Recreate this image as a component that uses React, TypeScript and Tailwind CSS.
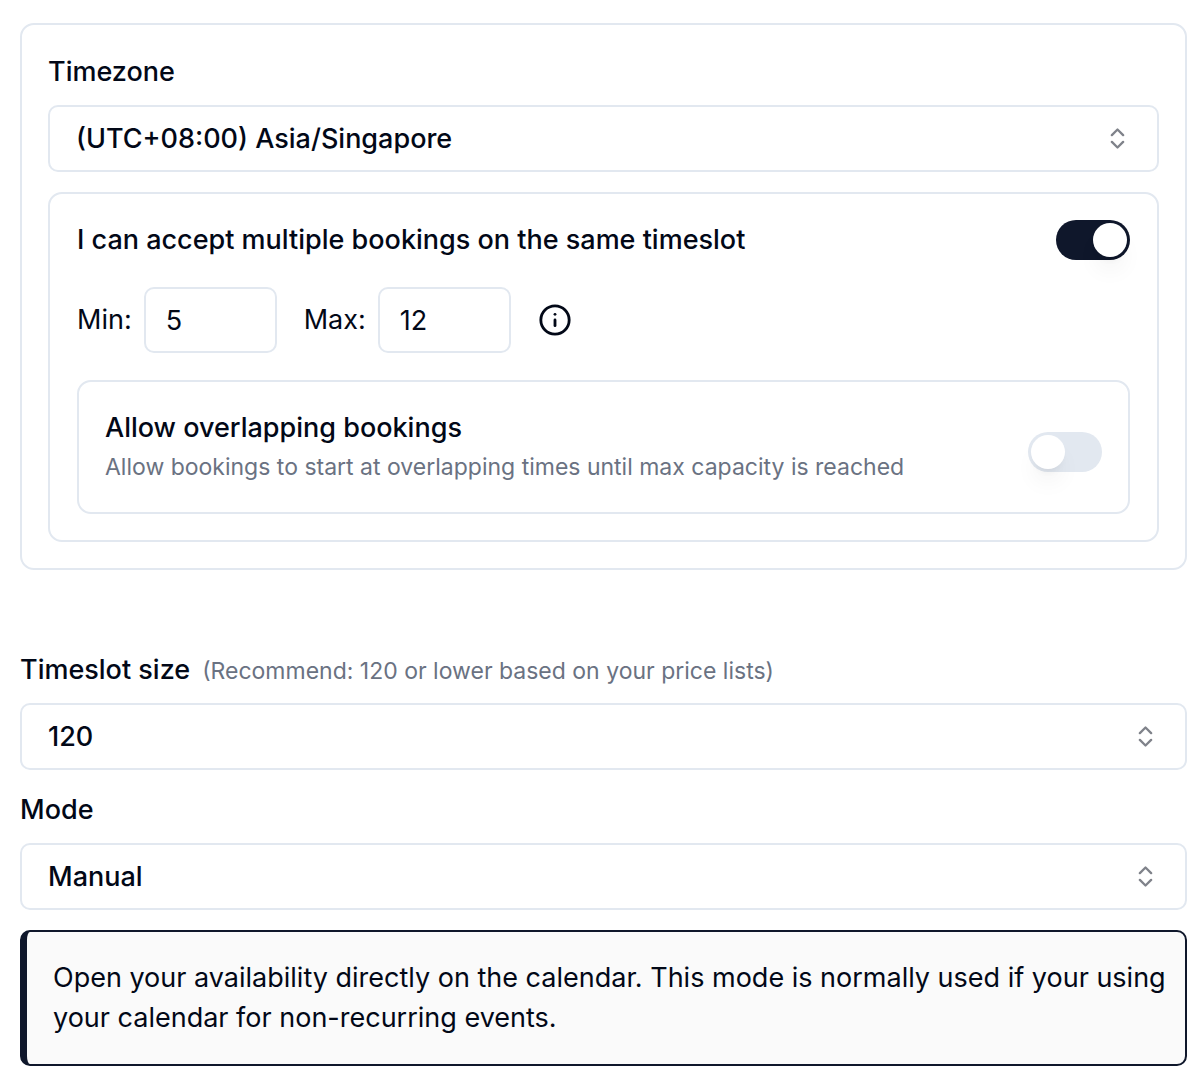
import React, { useState } from "react";
import { ChevronsUpDown, Info } from "lucide-react";

interface SelectFieldProps {
  id: string;
  value: string;
  options: string[];
  onChange: (value: string) => void;
}

const SelectField: React.FC<SelectFieldProps> = ({ id, value, options, onChange }) => {
  return (
    <div className="relative">
      <select
        id={id}
        value={value}
        onChange={(e) => onChange(e.target.value)}
        className="block h-[67px] w-full appearance-none rounded-[10px] border-2 border-slate-200 bg-white px-[26px] font-medium"
      >
        {options.map((option) => (
          <option key={option} value={option}>
            {option}
          </option>
        ))}
      </select>
      <ChevronsUpDown
        size={27}
        className="pointer-events-none absolute inset-y-0 right-7 my-auto opacity-50"
      />
    </div>
  );
};

interface SwitchProps {
  id: string;
  checked: boolean;
  onChange: (checked: boolean) => void;
}

const Switch: React.FC<SwitchProps> = ({ id, checked, onChange }) => {
  return (
    <button
      id={id}
      type="button"
      role="switch"
      aria-checked={checked}
      onClick={() => onChange(!checked)}
      className={`flex h-10 w-[74px] shrink-0 items-center rounded-full px-[3px] ${
        checked ? "justify-end bg-slate-900" : "justify-start bg-slate-200"
      }`}
    >
      <span className="size-[34px] rounded-full bg-white shadow-[0_16px_24px_-5px_rgba(0,0,0,0.07),0_6px_10px_-6px_rgba(0,0,0,0.1)]" />
    </button>
  );
};

const App: React.FC = () => {
  const [timezone, setTimezone] = useState("(UTC+08:00) Asia/Singapore");
  const [multiple, setMultiple] = useState(true);
  const [overlapping, setOverlapping] = useState(false);
  const [min, setMin] = useState("5");
  const [max, setMax] = useState("12");
  const [slotSize, setSlotSize] = useState("120");
  const [mode, setMode] = useState("Manual");

  return (
    <div className="bg-white pt-[23px] pr-[13px] pb-3 pl-5 font-['Inter',sans-serif] text-[27px] leading-10 text-[#020817]">
      <section className="rounded-[14px] border-2 border-slate-200 p-[26px] pt-[27px]">
        <label htmlFor="timezone" className="mb-[13px] block font-medium">
          Timezone
        </label>
        <SelectField
          id="timezone"
          value={timezone}
          options={["(UTC+08:00) Asia/Singapore", "(UTC+00:00) Europe/London"]}
          onChange={setTimezone}
        />

        <div className="mt-5 flex flex-col gap-[27px] rounded-[14px] border-2 border-slate-200 px-[27px] py-[26px]">
          <div className="flex items-center justify-between">
            <label htmlFor="multiple" className="font-medium">
              I can accept multiple bookings on the same timeslot
            </label>
            <Switch id="multiple" checked={multiple} onChange={setMultiple} />
          </div>

          <div className="flex items-center gap-[27px]">
            <div className="flex items-center gap-3">
              <label htmlFor="min">Min:</label>
              <input
                id="min"
                type="text"
                inputMode="numeric"
                value={min}
                onChange={(e) => setMin(e.target.value)}
                className="h-[66px] w-[133px] rounded-[10px] border-2 border-slate-200 px-5"
              />
            </div>
            <div className="flex items-center gap-3">
              <label htmlFor="max">Max:</label>
              <input
                id="max"
                type="text"
                inputMode="numeric"
                value={max}
                onChange={(e) => setMax(e.target.value)}
                className="h-[66px] w-[133px] rounded-[10px] border-2 border-slate-200 px-5"
              />
            </div>
            <button type="button" aria-label="About booking limits">
              <Info size={34} />
            </button>
          </div>

          <div className="flex items-center justify-between rounded-[14px] border-2 border-slate-200 p-[26px]">
            <div>
              <label htmlFor="overlapping" className="block font-medium">
                Allow overlapping bookings
              </label>
              <p className="text-[23px] leading-[38px] text-gray-500">
                Allow bookings to start at overlapping times until max capacity is reached
              </p>
            </div>
            <div className="pt-[10px]">
              <Switch id="overlapping" checked={overlapping} onChange={setOverlapping} />
            </div>
          </div>
        </div>
      </section>

      <section className="mt-20">
        <div className="mb-[13px] flex items-baseline gap-3">
          <label htmlFor="slot-size" className="font-medium">
            Timeslot size
          </label>
          <span className="text-[23px] leading-[38px] text-gray-500">
            (Recommend: 120 or lower based on your price lists)
          </span>
        </div>
        <SelectField
          id="slot-size"
          value={slotSize}
          options={["30", "60", "90", "120"]}
          onChange={setSlotSize}
        />
      </section>

      <section className="mt-5">
        <label htmlFor="mode" className="mb-[13px] block font-medium">
          Mode
        </label>
        <SelectField id="mode" value={mode} options={["Manual", "Recurring"]} onChange={setMode} />
        <p className="mt-5 rounded-[10px] border-2 border-l-[7px] border-slate-900 bg-neutral-50 py-[26px] pr-3 pl-[26px]">
          Open your availability directly on the calendar. This mode is normally used if your using
          your calendar for non-recurring events.
        </p>
      </section>
    </div>
  );
};

export default App;
